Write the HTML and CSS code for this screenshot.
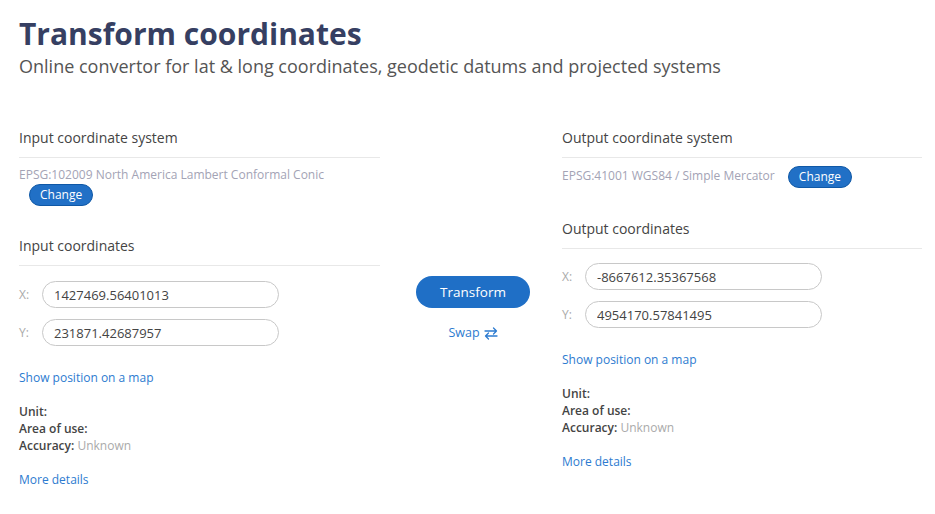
FILE: index.html
```html
<!DOCTYPE html>
<html>
<head>
<meta charset="utf-8">
<link rel="stylesheet" href="styles.css">
</head>
<body>
<div class="page">
  <header class="head">
    <h1 class="title">Transform coordinates</h1>
    <p class="subtitle">Online convertor for lat &amp; long coordinates, geodetic datums and projected systems</p>
  </header>
  <main class="grid">
    <section class="col">
      <h2 class="sec-title">Input coordinate system</h2>
      <div class="crs"><span class="crs-name">EPSG:102009 North America Lambert Conformal Conic</span> <button class="change">Change</button></div>
      <h2 class="sec-title coords-title">Input coordinates</h2>
      <div class="fields">
        <label class="field"><span class="axis">X:</span><input class="inp" value="1427469.56401013"></label>
        <label class="field"><span class="axis">Y:</span><input class="inp" value="231871.42687957"></label>
      </div>
      <a class="link map-link">Show position on a map</a>
      <div class="info">
        <div><b>Unit:</b></div>
        <div><b>Area of use:</b></div>
        <div><b>Accuracy:</b> <span class="muted">Unknown</span></div>
      </div>
      <a class="link more">More details</a>
    </section>
    <section class="mid">
      <button class="transform">Transform</button>
      <a class="link swap">Swap <svg class="swap-icon" width="14" height="13" viewBox="0 0 14 13" fill="none" stroke="currentColor" stroke-width="1.3" stroke-linecap="round" stroke-linejoin="round"><path d="M1 4h11.5M9.5 1l3 3-3 3"/><path d="M13 9H1.5M4.5 6l-3 3 3 3"/></svg></a>
    </section>
    <section class="col">
      <h2 class="sec-title">Output coordinate system</h2>
      <div class="crs"><span class="crs-name">EPSG:41001 WGS84 / Simple Mercator</span> <button class="change">Change</button></div>
      <h2 class="sec-title coords-title out">Output coordinates</h2>
      <div class="fields out">
        <label class="field"><span class="axis">X:</span><input class="inp" value="-8667612.35367568"></label>
        <label class="field"><span class="axis">Y:</span><input class="inp" value="4954170.57841495"></label>
      </div>
      <a class="link map-link">Show position on a map</a>
      <div class="info">
        <div><b>Unit:</b></div>
        <div><b>Area of use:</b></div>
        <div><b>Accuracy:</b> <span class="muted">Unknown</span></div>
      </div>
      <a class="link more">More details</a>
    </section>
  </main>
</div>
</body>
</html>
```
FILE: styles.css
```css
* { box-sizing: border-box; }
html, body { margin: 0; padding: 0; background: #fff; }
body { font-family: "Open Sans", "Noto Sans", sans-serif; color: #444; }
.page { padding: 12px 13px 0 19px; }
.title {
  margin: 0;
  font-size: 30px;
  font-weight: 700;
  line-height: 44px;
  color: #363f62;
}
.subtitle {
  margin: -2px 0 0;
  font-size: 18px;
  line-height: 24px;
  color: #555;
}
.grid {
  display: grid;
  grid-template-columns: 361px 182px 360px;
  margin-top: 49px;
}
.sec-title {
  margin: 0;
  font-size: 14px;
  font-weight: 400;
  line-height: 21px;
  color: #444;
  padding-bottom: 9px;
  border-bottom: 1px solid #e8e8e8;
}
.crs {
  margin-top: 8px;
  font-size: 12px;
  line-height: 18px;
  color: #a3a3b5;
}
.change {
  margin-left: 10px;
  font-family: inherit;
  font-size: 12px;
  line-height: 17px;
  color: #fff;
  background: #2170c6;
  border: 1px solid #0f58a6;
  border-radius: 11px;
  padding: 1px 10px 2px;
  vertical-align: middle;
}
.coords-title { margin-top: 29px; }
.coords-title.out { margin-top: 30px; }
.fields {
  display: flex;
  flex-direction: column;
  gap: 11px;
  margin-top: 15px;
}
.fields.out { margin-top: 14px; }
.field { display: flex; align-items: center; }
.axis {
  width: 23px;
  font-size: 12px;
  color: #aaa;
}
.inp {
  width: 237px;
  height: 27px;
  border: 1px solid #c8c8c8;
  border-radius: 14px;
  padding: 0 11px;
  font-family: inherit;
  font-size: 13px;
  color: #444;
  outline: none;
}
.link {
  display: block;
  color: #2d7bd0;
  font-size: 12px;
  line-height: 18px;
  text-decoration: none;
}
.map-link { margin-top: 23px; }
.info {
  margin-top: 16px;
  font-size: 12px;
  line-height: 17px;
  color: #444;
}
.info b { font-weight: 600; }
.muted { color: #aaa; }
.more { margin-top: 17px; }
.mid {
  display: flex;
  flex-direction: column;
  align-items: center;
  padding-top: 149px;
  padding-left: 4px;
}
.transform {
  width: 114px;
  height: 32px;
  border: none;
  border-radius: 16px;
  background: #1f6fc6;
  color: #fff;
  font-family: inherit;
  font-size: 13.5px;
}
.swap {
  margin-top: 16px;
  display: flex;
  align-items: center;
  gap: 4px;
  font-size: 12.5px;
}
.swap-icon { display: block; }
```
